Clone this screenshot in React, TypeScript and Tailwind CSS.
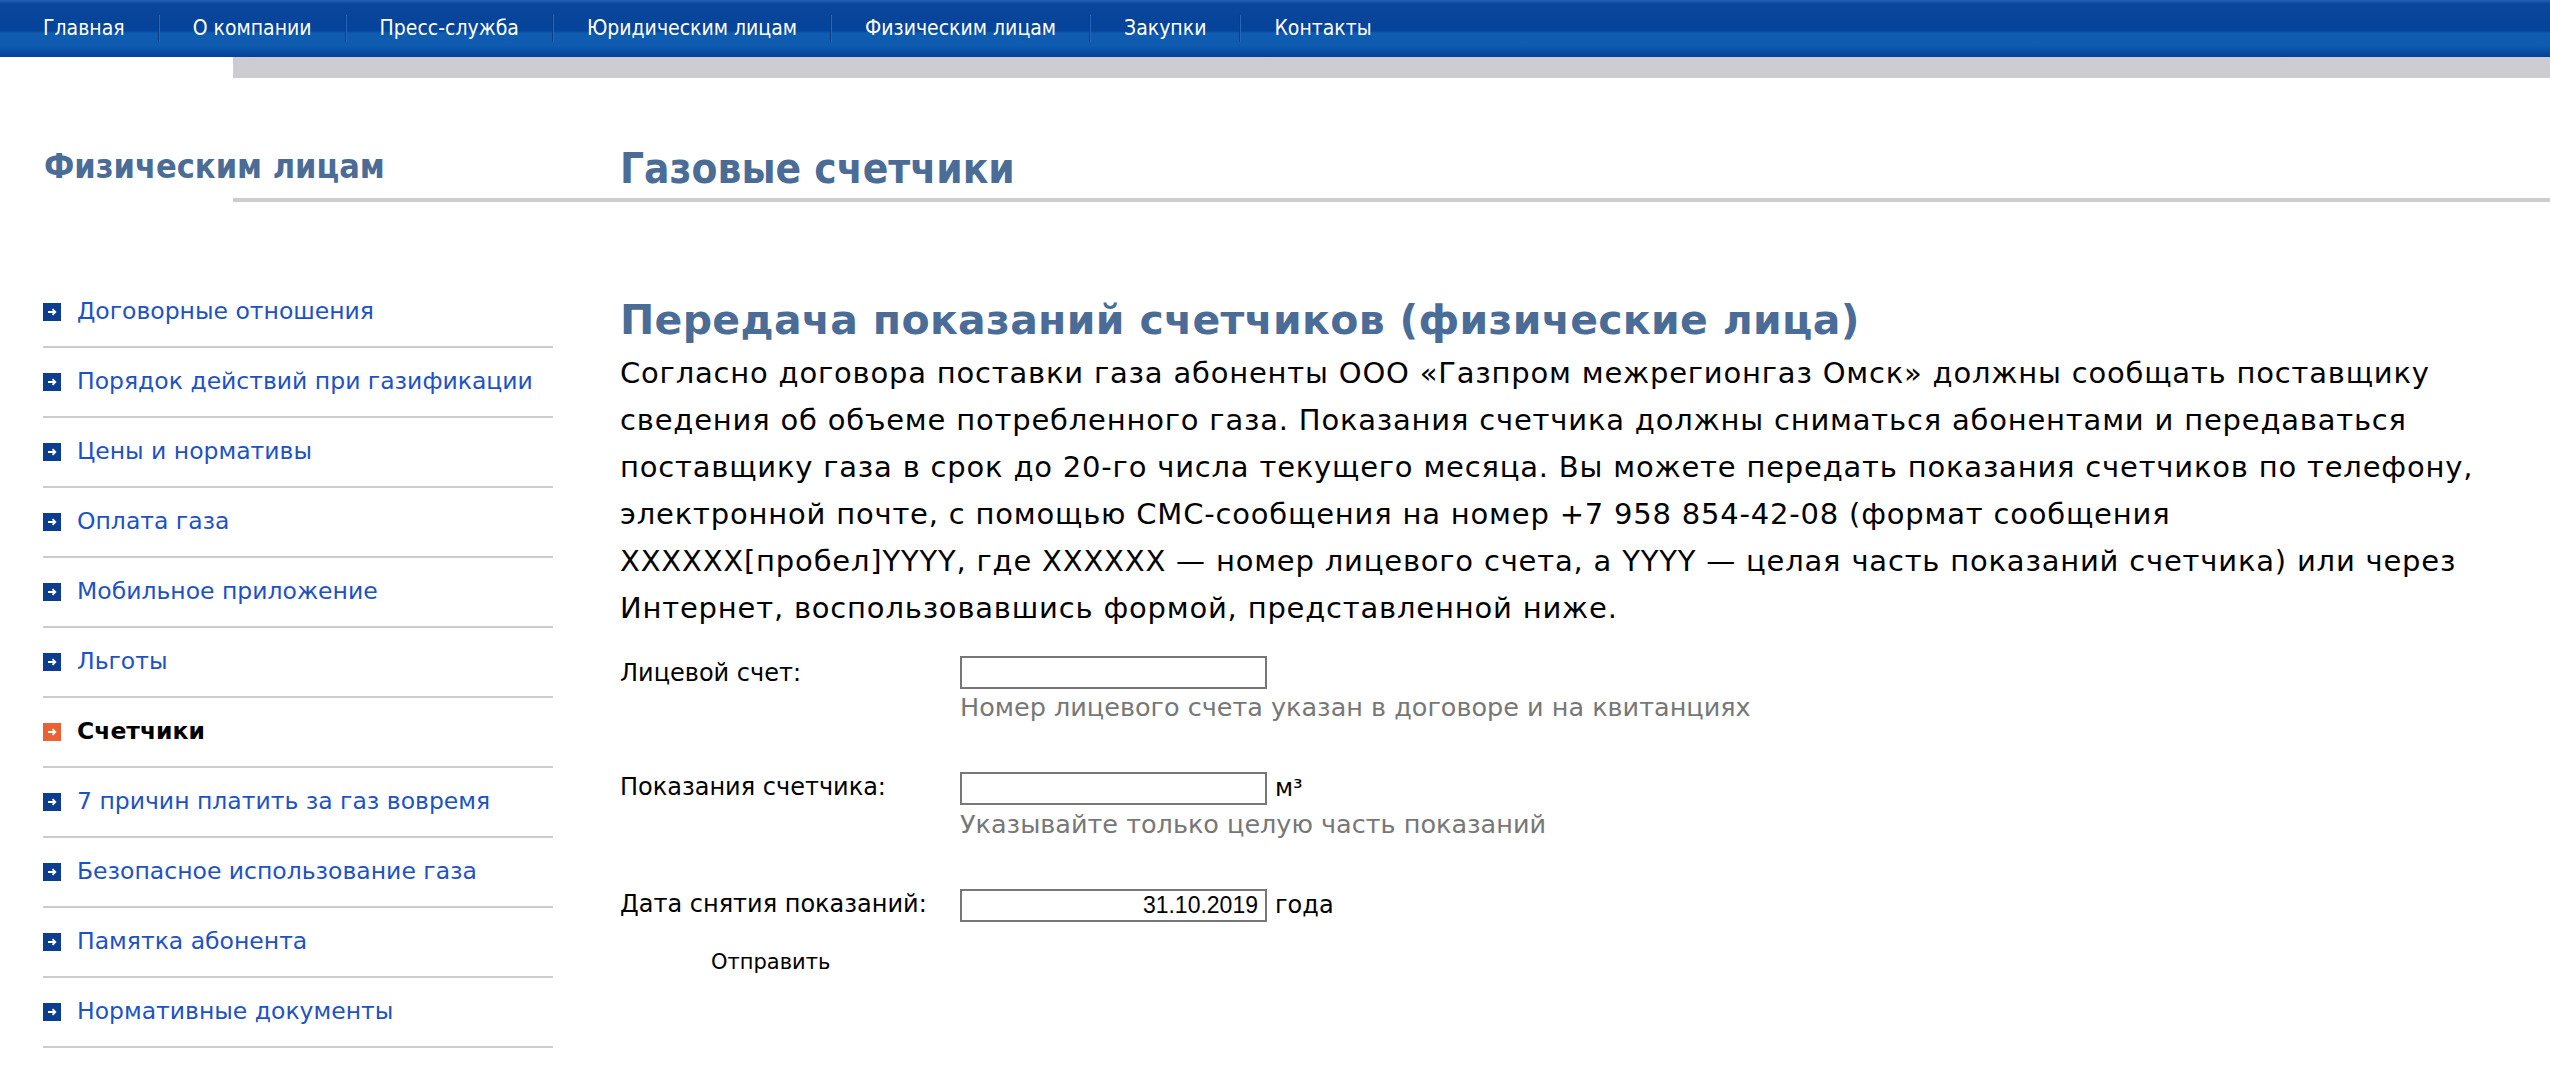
import React from "react"

const navItems = [
  "Главная",
  "О компании",
  "Пресс-служба",
  "Юридическим лицам",
  "Физическим лицам",
  "Закупки",
  "Контакты",
]

const sideItems = [
  "Договорные отношения",
  "Порядок действий при газификации",
  "Цены и нормативы",
  "Оплата газа",
  "Мобильное приложение",
  "Льготы",
  "Счетчики",
  "7 причин платить за газ вовремя",
  "Безопасное использование газа",
  "Памятка абонента",
  "Нормативные документы",
]

const verdana = "font-['DejaVu_Sans',Verdana,sans-serif]"
const tahoma = "font-['DejaVu_Sans_Condensed','DejaVu_Sans',Tahoma,sans-serif] [font-stretch:condensed]"

function Bullet({ active }: { active?: boolean }) {
  return (
    <svg width="18" height="18" viewBox="0 0 18 18" className="shrink-0">
      <rect width="18" height="18" fill={active ? "#ea6234" : "#0c3d8e"} />
      <path d="M5 9h7M9.5 6.2 12.3 9l-2.8 2.8" stroke="#fff" strokeWidth="1.8" fill="none" />
    </svg>
  )
}

function TopNav() {
  return (
    <nav className="h-[57px] flex items-center pl-[10px] bg-[linear-gradient(to_bottom,#2462b4_0px,#0a469c_4px,#04449a_31px,#0f5cb1_33px,#0e5bb0_46px,#03409a_57px)]">
      {navItems.map((item, i) => (
        <div key={item} className="flex items-center h-full">
          {i > 0 && <div className="w-[2px] h-[27px] bg-[#0a3d88] border-r border-[#2468bb]" />}
          <a className={`${tahoma} px-[33px] text-[21px] text-white leading-none`}>{item}</a>
        </div>
      ))}
    </nav>
  )
}

function Sidebar() {
  return (
    <aside className="w-[620px] shrink-0 pl-[43px] pr-[67px] pt-[76px]">
      <ul>
        {sideItems.map((item) => {
          const active = item === "Счетчики"
          return (
            <li key={item} className="h-[70px] flex items-center gap-[16px] border-b-2 border-[#cccccc]">
              <Bullet active={active} />
              <a
                className={`${verdana} text-[23.5px] ${active ? "font-bold text-black" : "text-[#1d52c4]"}`}
              >
                {item}
              </a>
            </li>
          )
        })}
      </ul>
    </aside>
  )
}

function Field({
  label,
  value,
  suffix,
  hint,
}: {
  label: string
  value?: string
  suffix?: string
  hint?: string
}) {
  return (
    <div className={`${verdana} flex`}>
      <div className="w-[340px] h-[33px] flex items-center text-[24px] text-black">{label}</div>
      <div>
        <div className="flex items-center">
          <div className="w-[307px] h-[33px] border-2 border-[#777777] flex items-center justify-end pr-[7px] font-['Liberation_Sans',Arial,sans-serif] text-[23px] text-black">
            {value}
          </div>
          {suffix && <span className="ml-[8px] text-[24px] text-black">{suffix}</span>}
        </div>
        {hint && <div className="pt-[2px] text-[25.5px] leading-[32px] text-[#777777]">{hint}</div>}
      </div>
    </div>
  )
}

export default function App() {
  return (
    <div className="min-h-[1090px] bg-white">
      <TopNav />
      <div className="ml-[233px] h-[21px] bg-[#cdcdd1]" />

      <div className="flex h-[120px]">
        <div className="w-[620px] shrink-0 pl-[44px] pt-[68px]">
          <div className={`${tahoma} font-bold text-[34px] leading-[40px] text-[#4a6c96]`}>Физическим лицам</div>
        </div>
        <h1 className={`${tahoma} pt-[67px] font-bold text-[42px] leading-[48px] text-[#4a6c96]`}>Газовые счетчики</h1>
      </div>
      <div className="ml-[233px] h-[4px] bg-[#cccccc]" />

      <div className="flex">
        <Sidebar />
        <main className="flex-1 pt-[94px]">
          <h2 className={`${verdana} font-bold text-[41px] leading-[48px] tracking-[0.3px] text-[#4a6c96]`}>
            Передача показаний счетчиков (физические лица)
          </h2>
          <p className={`${verdana} mt-[6px] text-[29px] leading-[47px] tracking-[0.8px] text-black whitespace-nowrap`}>
            Согласно договора поставки газа абоненты ООО «Газпром межрегионгаз Омск» должны сообщать поставщику
            <br />
            сведения об объеме потребленного газа. Показания счетчика должны сниматься абонентами и передаваться
            <br />
            поставщику газа в срок до 20-го числа текущего месяца. Вы можете передать показания счетчиков по телефону,
            <br />
            электронной почте, с помощью СМС-сообщения на номер +7 958 854-42-08 (формат сообщения
            <br />
            XXXXXX[пробел]YYYY, где XXXXXX — номер лицевого счета, а YYYY — целая часть показаний счетчика) или через
            <br />
            Интернет, воспользовавшись формой, представленной ниже.
          </p>

          <div className="mt-[24px] flex flex-col">
            <Field label="Лицевой счет:" hint="Номер лицевого счета указан в договоре и на квитанциях" />
            <div className="mt-[47px]">
              <Field label="Показания счетчика:" suffix="м³" hint="Указывайте только целую часть показаний" />
            </div>
            <div className="mt-[47px]">
              <Field label="Дата снятия показаний:" value="31.10.2019" suffix="года" />
            </div>
            <button className={`${verdana} mt-[24px] ml-[86px] self-start px-[5px] h-[32px] text-[21px] text-black bg-transparent`}>
              Отправить
            </button>
          </div>
        </main>
      </div>
    </div>
  )
}
